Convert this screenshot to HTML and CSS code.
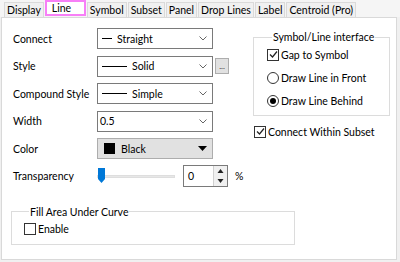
FILE: index.html
```html
<!DOCTYPE html>
<html lang="en">
<head>
    <meta charset="UTF-8">
    <title>Plot Details - Line</title>
    <link rel="stylesheet" href="styles.css">
</head>
<body>
    <div class="dialog">
        <!-- Tab strip -->
        <div class="tabs">
            <div class="tab">Display</div>
            <div class="tab active">Line</div>
            <div class="tab">Symbol</div>
            <div class="tab">Subset</div>
            <div class="tab">Panel</div>
            <div class="tab">Drop Lines</div>
            <div class="tab">Label</div>
            <div class="tab">Centroid (Pro)</div>
        </div>

        <!-- Line page -->
        <div class="page">
            <div class="main">
                <div class="fields">
                    <div class="row">
                        <span class="label">Connect</span>
                        <div class="combo">
                            <span class="sample short"></span>Straight
                            <svg class="chev" width="8" height="5" viewBox="0 0 8 5"><polyline points="0.5,0.5 4,4 7.5,0.5" fill="none" stroke="#666" stroke-width="1"/></svg>
                        </div>
                    </div>
                    <div class="row">
                        <span class="label">Style</span>
                        <div class="combo">
                            <span class="sample"></span>Solid
                            <svg class="chev" width="8" height="5" viewBox="0 0 8 5"><polyline points="0.5,0.5 4,4 7.5,0.5" fill="none" stroke="#666" stroke-width="1"/></svg>
                        </div>
                        <button class="more">...</button>
                    </div>
                    <div class="row">
                        <span class="label">Compound Style</span>
                        <div class="combo">
                            <span class="sample"></span>Simple
                            <svg class="chev" width="8" height="5" viewBox="0 0 8 5"><polyline points="0.5,0.5 4,4 7.5,0.5" fill="none" stroke="#666" stroke-width="1"/></svg>
                        </div>
                    </div>
                    <div class="row">
                        <span class="label">Width</span>
                        <div class="combo edit">
                            0.5
                            <svg class="chev" width="8" height="5" viewBox="0 0 8 5"><polyline points="0.5,0.5 4,4 7.5,0.5" fill="none" stroke="#666" stroke-width="1"/></svg>
                        </div>
                    </div>
                    <div class="row">
                        <span class="label">Color</span>
                        <div class="combo color">
                            <span class="swatch"></span>Black
                            <svg class="tri" width="9" height="5" viewBox="0 0 9 5"><polygon points="0,0 9,0 4.5,5" fill="#000"/></svg>
                        </div>
                    </div>
                    <div class="row">
                        <span class="label">Transparency</span>
                        <div class="slider">
                            <div class="track"></div>
                            <svg class="thumb" width="7" height="15" viewBox="0 0 7 15"><polygon points="0,0 7,0 7,11 3.5,15 0,11" fill="#0078d7"/></svg>
                        </div>
                        <div class="spin">
                            <span class="value">0</span>
                            <div class="arrows">
                                <svg width="13" height="10" viewBox="0 0 13 10"><polygon points="3.5,7 9.5,7 6.5,3" fill="#222"/></svg>
                                <svg width="13" height="10" viewBox="0 0 13 10"><polygon points="3.5,3 9.5,3 6.5,7" fill="#222"/></svg>
                            </div>
                        </div>
                        <span class="unit">%</span>
                    </div>
                </div>

                <div class="side">
                    <fieldset class="group interface">
                        <legend>Symbol/Line interface</legend>
                        <div class="option">
                            <span class="box checked"><svg width="9" height="9" viewBox="0 0 9 9"><polyline points="1,4.5 3.5,7 8,1.5" fill="none" stroke="#222" stroke-width="1.2"/></svg></span>Gap to Symbol
                        </div>
                        <div class="option">
                            <span class="radio"></span>Draw Line in Front
                        </div>
                        <div class="option">
                            <span class="radio on"></span>Draw Line Behind
                        </div>
                    </fieldset>
                    <div class="option subset">
                        <span class="box checked"><svg width="9" height="9" viewBox="0 0 9 9"><polyline points="1,4.5 3.5,7 8,1.5" fill="none" stroke="#222" stroke-width="1.2"/></svg></span>Connect Within Subset
                    </div>
                </div>
            </div>

            <fieldset class="group fill">
                <legend>Fill Area Under Curve</legend>
                <div class="option">
                    <span class="box"></span>Enable
                </div>
            </fieldset>
        </div>
    </div>
</body>
</html>
```

FILE: styles.css
```css
/* Plot details dialog, Line tab */
body {
    margin: 0;
    width: 400px;
    height: 262px;
    overflow: hidden;
    background-color: #f0f0f0;
    font-family: Lato, "Noto Sans", sans-serif;
    font-size: 10.5px;
    color: #000;
    white-space: nowrap;
}

.dialog {
    width: 400px;
    height: 262px;
}

.tabs {
    display: flex;
    height: 17px;
    padding-left: 4px;
    background-color: #f5f5f5;
}

.tab {
    height: 14px;
    margin-top: 2px;
    margin-right: 1px;
    padding: 0 2px;
    line-height: 14px;
    background-color: #f0f0f0;
    border: 1px solid #dadada;
    border-bottom: none;
}

.tab.active {
    box-sizing: border-box;
    width: 41px;
    height: 16px;
    margin-top: 0;
    padding-left: 5px;
    line-height: 12px;
    background-color: #fff;
    border: 2px solid #f77ff7;
}

.page {
    box-sizing: border-box;
    width: 396px;
    height: 243px;
    margin-left: 1px;
    padding: 10px 0 0 9px;
    background-color: #fff;
    border: 1px solid #d9d9d9;
}

.main {
    display: flex;
}

.fields {
    display: flex;
    flex-direction: column;
    gap: 6.5px;
    width: 233px;
}

.row {
    display: flex;
    align-items: center;
    height: 21px;
}

.label {
    width: 84px;
    padding-left: 2px;
}

.combo {
    box-sizing: border-box;
    display: flex;
    align-items: center;
    width: 116px;
    height: 21px;
    padding-left: 4px;
    border: 1px solid #7a7a7a;
    background-color: #fff;
}

.combo.edit {
    padding-left: 2px;
}

.chev {
    margin-left: auto;
    margin-right: 5px;
}

.sample {
    width: 25px;
    height: 1px;
    margin-right: 5px;
    background-color: #000;
}

.sample.short {
    width: 10px;
}

.combo.color {
    padding-left: 6px;
    background-color: #e1e1e1;
    border-color: #adadad;
}

.swatch {
    width: 11px;
    height: 11px;
    margin-right: 6px;
    background-color: #000;
}

.tri {
    margin-left: auto;
    margin-right: 5px;
}

.more {
    box-sizing: border-box;
    width: 14px;
    height: 16px;
    margin-left: 2px;
    padding: 0;
    font-family: inherit;
    font-size: 8px;
    line-height: 8px;
    color: #333;
    background-color: #e1e1e1;
    border: 1px solid #adadad;
}

.slider {
    position: relative;
    width: 79px;
    height: 21px;
}

.track {
    margin-top: 9px;
    width: 78px;
    height: 3px;
    background-color: #e7e7e7;
    border: 1px solid #dedede;
    box-sizing: border-box;
}

/* thumb sits over the track */
.thumb {
    position: absolute;
    left: 1px;
    top: 2px;
}

.spin {
    box-sizing: border-box;
    display: flex;
    width: 45px;
    height: 22px;
    margin-left: 7px;
    border: 1px solid #7a7a7a;
}

.spin .value {
    flex: 1;
    padding-left: 4px;
    line-height: 20px;
}

.spin .arrows {
    display: flex;
    flex-direction: column;
    width: 13px;
    border-left: 1px solid #d0d0d0;
    background-color: #f0f0f0;
}

.unit {
    margin-left: 7px;
}

.side {
    width: 137px;
    margin-left: 9px;
    padding-top: 2px;
}

.group {
    margin: 0;
    padding: 0;
    border: 1px solid #dcdcdc;
}

.group legend {
    margin-left: 5px;
    padding: 0 1px;
    line-height: 14px;
}

.interface {
    height: 82px;
    padding: 2px 0 0 13px;
}

.option {
    display: flex;
    align-items: center;
    height: 17px;
}

.interface .option + .option {
    margin-top: 6px;
}

.box {
    box-sizing: border-box;
    display: flex;
    align-items: center;
    justify-content: center;
    width: 12px;
    height: 12px;
    margin-right: 2px;
    border: 1px solid #333;
    background-color: #fff;
}

.radio {
    position: relative;
    box-sizing: border-box;
    width: 12px;
    height: 12px;
    margin-right: 2px;
    border: 1px solid #333;
    border-radius: 50%;
}

.radio.on::after {
    content: "";
    position: absolute;
    left: 2px;
    top: 2px;
    width: 6px;
    height: 6px;
    border-radius: 50%;
    background-color: #000;
}

.subset {
    margin-top: 7px;
    margin-left: 1px;
}

.fill {
    width: 284px;
    height: 40px;
    margin-top: 18px;
    padding: 2px 0 0 12px;
    box-sizing: border-box;
}
```
